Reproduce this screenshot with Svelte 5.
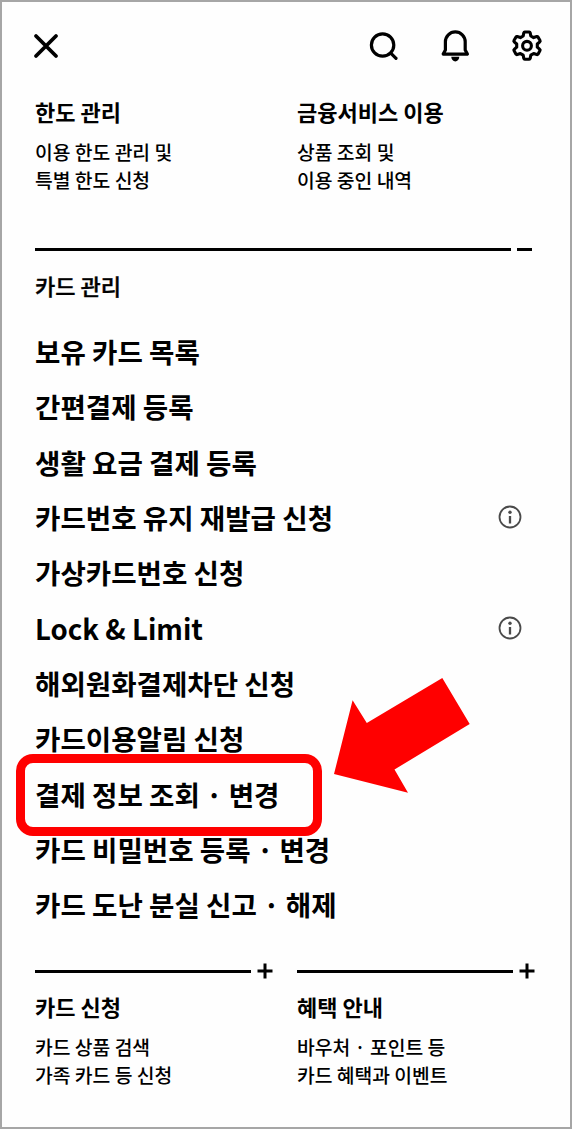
<script>
    const topLinks = [
        {title: '한도 관리', lines: ['이용 한도 관리 및', '특별 한도 신청']},
        {title: '금융서비스 이용', lines: ['상품 조회 및', '이용 중인 내역']},
    ];

    const menu = [
        {label: '보유 카드 목록'},
        {label: '간편결제 등록'},
        {label: '생활 요금 결제 등록'},
        {label: '카드번호 유지 재발급 신청', info: true},
        {label: '가상카드번호 신청'},
        {label: 'Lock & Limit', info: true},
        {label: '해외원화결제차단 신청'},
        {label: '카드이용알림 신청'},
        {label: '결제 정보 조회 · 변경', marked: true},
        {label: '카드 비밀번호 등록 · 변경'},
        {label: '카드 도난 분실 신고 · 해제'},
    ];

    const bottomLinks = [
        {title: '카드 신청', lines: ['카드 상품 검색', '가족 카드 등 신청']},
        {title: '혜택 안내', lines: ['바우처 · 포인트 등', '카드 혜택과 이벤트']},
    ];
</script>

<style>
    :global(body) {
        margin: 0;
        background: #fff;
    }

    .screen {
        width: 572px;
        height: 1129px;
        box-sizing: border-box;
        padding: 0 34px 0 33px;
        border: 2px solid #a6a6a6;
        background: #fefefe;
        color: #000;
        font-family: "Noto Sans CJK KR", sans-serif;
        overflow: hidden;
    }

    header {
        display: flex;
        align-items: center;
        height: 87px;
        margin-right: -7px;
    }

    button {
        display: block;
        padding: 0;
        border: none;
        background: none;
        color: inherit;
    }

    .close {
        margin: 0 auto 0 -5px;
    }

    .actions {
        display: flex;
        gap: 39.5px;
    }

    svg {
        display: block;
        fill: none;
        stroke: currentColor;
    }

    .links {
        display: grid;
        grid-template-columns: 262px 1fr;
    }

    .top {
        height: 150px;
        padding-top: 7px;
        box-sizing: border-box;
    }

    h2, h3, p, ul {
        margin: 0;
    }

    h2, h3 {
        font-size: 22px;
        line-height: 30px;
        font-weight: 700;
        white-space: nowrap;
    }

    .links p {
        margin-top: 13px;
        font-size: 19.3px;
        line-height: 27.5px;
        font-weight: 500;
        white-space: nowrap;
    }

    .links span {
        display: block;
    }

    .divider {
        display: flex;
        gap: 6px;
        margin-top: 9px;
    }

    .divider i {
        width: 476px;
        height: 3px;
        background: #000;
    }

    .divider i + i {
        width: 15px;
    }

    h2 {
        margin-top: 19px;
        font-weight: 500;
        -webkit-text-stroke: 0.4px #000;
    }

    ul {
        padding: 0;
        margin-top: 23.5px;
        list-style: none;
    }

    li {
        position: relative;
        display: flex;
        align-items: center;
        justify-content: space-between;
        height: 55.3px;
        padding-right: 14px;
        font-size: 27.6px;
        line-height: 40px;
        font-weight: 700;
        white-space: nowrap;
    }

    .info {
        color: #4a4a4a;
    }

    .mark {
        position: absolute;
        top: -11.5px;
        left: -19px;
        width: 306px;
        height: 82px;
        box-sizing: border-box;
        border: 9px solid #f00;
        border-radius: 17px;
    }

    .arrow {
        position: absolute;
        top: -87.5px;
        left: 299px;
        fill: #f00;
        stroke: none;
    }

    .bottom {
        margin-top: 30.5px;
    }

    .rule {
        display: flex;
        align-items: center;
        gap: 6px;
        height: 18px;
        margin-bottom: 11px;
    }

    .rule i {
        width: 216px;
        height: 3px;
        background: #000;
    }
</style>

<div class="screen">
    <header>
        <button class="close" aria-label="닫기">
            <svg width="32" height="32" viewBox="0 0 32 32" stroke-width="3.8" stroke-linecap="round">
                <path d="M6 6 26 26M26 6 6 26"/>
            </svg>
        </button>
        <div class="actions">
            <button aria-label="검색">
                <svg width="32" height="32" viewBox="0 0 32 32" stroke-width="3.2" stroke-linecap="round">
                    <circle cx="14.6" cy="15" r="11.2"/>
                    <path d="m23 23.4 5 5"/>
                </svg>
            </button>
            <button aria-label="알림">
                <svg width="32" height="32" viewBox="0 0 32 32" stroke-width="3.2" stroke-linejoin="round">
                    <path d="M5.4 11.8a9.9 9.9 0 0 1 19.8 0v8.3l2.2 4H3.2l2.2-4z"/>
                    <path d="M11.3 26.8h8a4 4.6 0 0 1-8 0z" fill="currentColor" stroke="none"/>
                </svg>
            </button>
            <button aria-label="설정">
                <svg width="32" height="32" viewBox="0 0 32 32" stroke-width="3.1" stroke-linejoin="round">
                    <path d="M13.8 2h4.4q.8 0 1 .8l.6 3.2 2.8 1.6 3.2-1q.8-.2 1.2.4l2 3.6q.4.7-.2 1.2l-2.500 2.200v3.200l2.500 2.200q.6.5.2 1.2l-2 3.6q-.4.6-1.2.4l-3.2-1-2.8 1.6-.6 3.2q-.2.8-1 .8h-4.4q-.8 0-1-.8l-.6-3.2-2.8-1.6-3.2 1q-.8.2-1.2-.4l-2-3.6q-.4-.7.2-1.2l2.500-2.200v-3.200L3.200 11.800q-.6-.5-.2-1.2l2-3.600q.4-.6 1.200-.4l3.200 1L12.200 6l.6-3.200q.2-.8 1-.8z"/>
                    <circle cx="16" cy="15.8" r="4.4"/>
                </svg>
            </button>
        </div>
    </header>

    <div class="links top">
        {#each topLinks as link}
            <section>
                <h3>{link.title}</h3>
                <p>
                    {#each link.lines as line}<span>{line}</span>{/each}
                </p>
            </section>
        {/each}
    </div>

    <div class="divider"><i></i><i></i></div>

    <h2>카드 관리</h2>
    <ul>
        {#each menu as item}
            <li>
                {item.label}
                {#if item.info}
                    <svg class="info" width="24" height="24" viewBox="0 0 24 24" stroke-width="1.8">
                        <circle cx="12" cy="12" r="10.5"/>
                        <path d="M12 11v7.5" stroke-width="2.3"/>
                        <circle cx="12" cy="7.3" r="1.7" fill="currentColor" stroke="none"/>
                    </svg>
                {/if}
                {#if item.marked}
                    <div class="mark"></div>
                    <svg class="arrow" width="136" height="115" viewBox="0 0 136 115">
                        <path d="M0 96 18.6 22.3 32.8 45 108.3 0 135.7 46 60.5 91.5 74 114.8z"/>
                    </svg>
                {/if}
            </li>
        {/each}
    </ul>

    <div class="links bottom">
        {#each bottomLinks as link}
            <section>
                <div class="rule">
                    <i></i>
                    <svg width="16" height="16" viewBox="0 0 16 16" stroke-width="3">
                        <path d="M.5 8h15M8 .5v15"/>
                    </svg>
                </div>
                <h3>{link.title}</h3>
                <p>
                    {#each link.lines as line}<span>{line}</span>{/each}
                </p>
            </section>
        {/each}
    </div>
</div>
